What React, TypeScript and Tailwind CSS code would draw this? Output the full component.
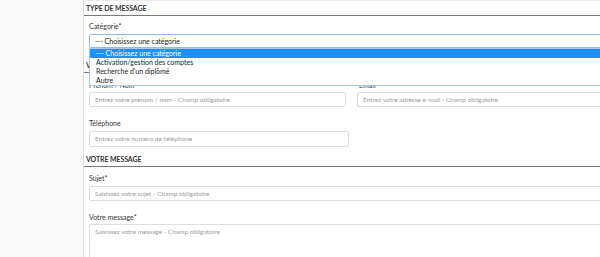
import React from 'react';

const categories = [
  '--- Choisissez une catégorie',
  'Activation/gestion des comptes',
  "Recherche d'un diplômé",
  'Autre',
];

function Heading({ title, className }: { title: string; className: string }) {
  return (
    <div className={`${className} h-[16px] border-b border-[#7a7a7a] pl-[2px] pt-[3px] text-[7px] leading-[10px] font-bold uppercase tracking-[-0.1px] text-[#333]`}>
      {title}
    </div>
  );
}

function Label({ text, className }: { text: string; className: string }) {
  return <div className={`${className} text-[7px] leading-[10px] text-[#333]`}>{text}</div>;
}

function Field({ placeholder, className }: { placeholder: string; className: string }) {
  return (
    <div className={`${className} flex items-center rounded-[2px] border border-[#dedede] bg-white pl-[5px] text-[6.5px] text-[#9d9d9d]`}>
      {placeholder}
    </div>
  );
}

export default function App() {
  return (
    <div className="flex h-[257px] w-[600px] overflow-hidden bg-white font-['Lato','Liberation_Sans',sans-serif]">
      {/* left gutter */}
      <div className="w-[84px] shrink-0 border-r border-[#dcdcdc] bg-[#f8f8f8]" />

      <div className="relative w-[540px] shrink-0 border-t border-[#ebebeb]">
        <Heading title="Type de message" className="-mt-px" />

        {/* Category */}
        <div className="pl-[5px]">
          <Label text="Catégorie*" className="mt-[5px] mb-[3px]" />
          <div className="flex h-[14px] items-center rounded-[2px] border border-[#8fbcef] bg-white pl-[5px] text-[7px] text-[#222]">
            --- Choisissez une catégorie
          </div>
        </div>

        {/* open dropdown */}
        <div className="absolute left-[5px] top-[47px] z-10 w-[540px] border border-[#a9c8ee] bg-white text-[7px] text-[#222]">
          {categories.map((c, i) => (
            <div
              key={c}
              className={`h-[9px] pl-[6px] leading-[9px] ${i === 0 ? 'bg-[#1e90ff] text-white' : ''}`}
            >
              {c}
            </div>
          ))}
        </div>

        <Heading title="Votre identité" className="mt-[9px]" />

        <div className="pl-[5px]">
          <div className="flex gap-[11px]">
            <div className="w-[260px]">
              <Label text="Prénom / Nom*" className="mt-[7px] mb-[2px]" />
              <Field placeholder="Entrez votre prénom / nom - Champ obligatoire" className="h-[15px]" />
            </div>
            <div className="w-[270px]">
              <Label text="Email*" className="mt-[7px] mb-[2px] pl-[2px]" />
              <Field placeholder="Entrez votre adresse e-mail - Champ obligatoire" className="h-[15px]" />
            </div>
          </div>

          <div className="w-[260px]">
            <Label text="Téléphone" className="mt-[11px] mb-[3px]" />
            <Field placeholder="Entrez votre numéro de téléphone" className="h-[16px]" />
          </div>
        </div>

        <Heading title="Votre message" className="mt-[4px]" />

        <div className="pl-[5px]">
          <Label text="Sujet*" className="mt-[6px] mb-[3px]" />
          <Field placeholder="Saisissez votre sujet - Champ obligatoire" className="h-[15px]" />

          <Label text="Votre message*" className="mt-[11px] mb-[2px]" />
          <div className="h-[60px] rounded-[2px] border border-[#dedede] bg-white pl-[5px] pt-[2px] text-[6.5px] text-[#9d9d9d]">
            Saisissez votre message - Champ obligatoire
          </div>
        </div>
      </div>
    </div>
  );
}
